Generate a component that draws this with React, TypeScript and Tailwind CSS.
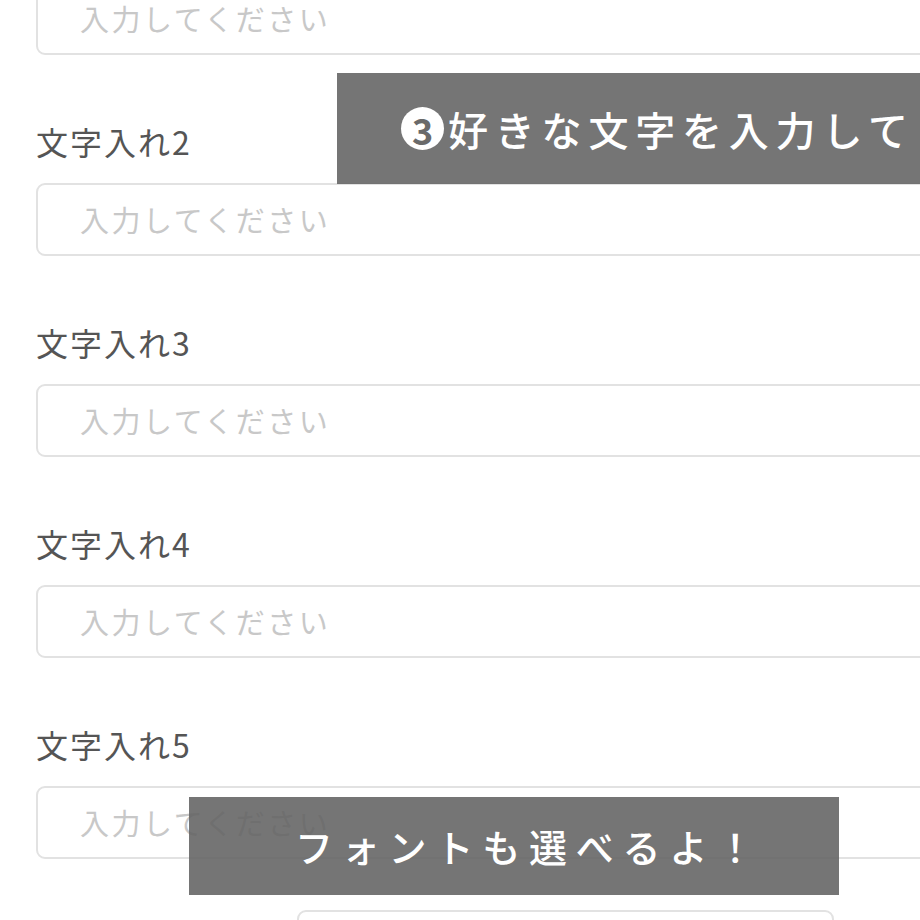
import React from 'react';

const fields = ['文字入れ2', '文字入れ3', '文字入れ4', '文字入れ5'];

const TextBox: React.FC<{ className?: string }> = ({ className = '' }) => (
  <div
    className={`h-[73px] w-[900px] rounded-[9px] border-2 border-[#e2e2e2] bg-white flex items-center pl-[42px] ${className}`}
  >
    <input
      placeholder="入力してください"
      className="w-full bg-transparent text-[29px] tracking-[2.5px] text-[#555] placeholder:text-[#c8c8c8] outline-none"
    />
  </div>
);

export default function App() {
  return (
    <div
      className="relative h-[920px] w-[920px] overflow-hidden bg-white"
      style={{ fontFamily: '"Noto Sans CJK JP", "Noto Sans", sans-serif' }}
    >
      <div className="flex flex-col pl-[36px]">
        {/* field 1, cut off at top */}
        <TextBox className="-mt-[18px]" />

        {fields.map((label) => (
          <div key={label} className="flex flex-col">
            <label className="mt-[66px] h-[40px] flex items-center text-[32px] leading-none tracking-[2px] text-[#555]">
              {label}
            </label>
            <TextBox className="mt-[22px]" />
          </div>
        ))}

        {/* font select */}
        <div className="mt-[51px] ml-[261px] h-[60px] w-[537px] rounded-[9px] border-2 border-[#e2e2e2] bg-white" />
      </div>

      {/* caption overlays */}
      <div className="absolute left-[337px] top-[73px] h-[111px] w-[600px] bg-[rgba(98,98,98,0.88)] flex items-center pl-[64px]">
        <span className="mr-[4px] flex h-[43px] w-[43px] shrink-0 items-center justify-center rounded-full bg-white text-[36px] font-bold leading-none text-[#6a6a6a]">
          3
        </span>
        <span className="text-[40px] font-medium leading-none tracking-[6.8px] text-white whitespace-nowrap">
          好きな文字を入力して
        </span>
      </div>

      <div className="absolute left-[189px] top-[797px] h-[98px] w-[650px] bg-[rgba(98,98,98,0.88)] flex items-center pl-[106px]">
        <span className="text-[38px] font-medium leading-none tracking-[8.8px] text-white whitespace-nowrap">
          フォントも選べるよ！
        </span>
      </div>
    </div>
  );
}
